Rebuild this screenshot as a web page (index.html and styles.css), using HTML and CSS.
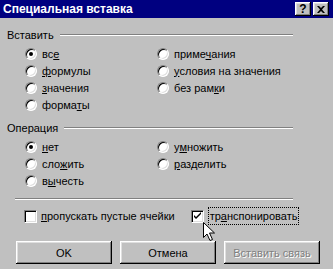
FILE: index.html
```html
<!DOCTYPE html>
<html lang="ru">
<head>
  <meta charset="UTF-8">
  <title>Специальная вставка</title>
  <link rel="stylesheet" href="styles.css">
</head>
<body>

  <!-- Title bar -->
  <header class="titlebar">
    <span class="title">Специальная вставка</span>
    <div class="title-buttons">
      <span class="tbtn help">?</span>
      <span class="tbtn close">
        <svg width="8" height="7" viewBox="0 0 8 7"><path d="M0 0h2l2 2 2-2h2L5 3.5 8 7H6L4 5 2 7H0l3-3.5z" fill="#000"/></svg>
      </span>
    </div>
  </header>

  <main class="dialog">

    <!-- Paste group -->
    <div class="group-head"><span>Вставить</span><i class="etch"></i></div>
    <div class="options paste">
      <label class="opt"><span class="radio on"></span><span>вс<u>е</u></span></label>
      <label class="opt"><span class="radio"></span><span>приме<u>ч</u>ания</span></label>
      <label class="opt"><span class="radio"></span><span><u>ф</u>ормулы</span></label>
      <label class="opt"><span class="radio"></span><span><u>у</u>словия на значения</span></label>
      <label class="opt"><span class="radio"></span><span><u>з</u>начения</span></label>
      <label class="opt"><span class="radio"></span><span>без рам<u>к</u>и</span></label>
      <label class="opt"><span class="radio"></span><span>форма<u>т</u>ы</span></label>
    </div>

    <!-- Operation group -->
    <div class="group-head"><span>Операция</span><i class="etch"></i></div>
    <div class="options">
      <label class="opt"><span class="radio on"></span><span><u>н</u>ет</span></label>
      <label class="opt"><span class="radio"></span><span>у<u>м</u>ножить</span></label>
      <label class="opt"><span class="radio"></span><span>сло<u>ж</u>ить</span></label>
      <label class="opt"><span class="radio"></span><span><u>р</u>азделить</span></label>
      <label class="opt"><span class="radio"></span><span>в<u>ы</u>честь</span></label>
    </div>

    <i class="etch full"></i>

    <div class="checks">
      <label class="chk"><span class="box"></span><span><u>п</u>ропускать пустые ячейки</span></label>
      <label class="chk"><span class="box">
        <svg width="9" height="9" viewBox="0 0 9 9"><path d="M1 3l2 2 5-5v2L3 7 1 5z" fill="#000"/></svg>
      </span><span class="focus">тр<u>а</u>нспонировать</span></label>
      <!-- mouse pointer -->
      <svg class="pointer" width="13" height="20" viewBox="0 0 13 20">
        <path d="M0.5 0.5v15l3.5-3.5 3 6.5 2.5-1-3-6.5h5z" fill="#fff" stroke="#000" stroke-width="1"/>
      </svg>
    </div>

    <div class="buttons">
      <button class="btn">OK</button>
      <button class="btn">Отмена</button>
      <button class="btn" disabled>Вставить связь</button>
    </div>

  </main>

</body>
</html>
```

FILE: styles.css
```css
* {
  margin: 0;
  padding: 0;
  box-sizing: border-box;
}

body {
  font-family: "Liberation Sans", Arial, sans-serif;
  font-size: 11px;
  color: #000;
  background: #c0c0c0;
  width: 333px;
  height: 269px;
  overflow: hidden;
}

/* title bar */
.titlebar {
  height: 18px;
  background: #000080;
  color: #fff;
  display: flex;
  align-items: center;
  justify-content: space-between;
  padding: 0 4px 0 3px;
}

.title {
  font-weight: bold;
  font-size: 12px;
}

.title-buttons {
  display: flex;
  gap: 2px;
}

.tbtn {
  width: 16px;
  height: 14px;
  background: #c0c0c0;
  color: #000;
  display: flex;
  align-items: center;
  justify-content: center;
  font-weight: bold;
  font-size: 12px;
  box-shadow: inset -1px -1px #000, inset 1px 1px #fff, inset -2px -2px #808080, inset 2px 2px #dfdfdf;
}

/* body of the dialog */
.dialog {
  padding: 10px 0 0 7px;
}

.group-head {
  display: flex;
  align-items: center;
  width: 286px;
  height: 13px;
  gap: 6px;
}

.etch {
  flex: 1;
  height: 2px;
  border-top: 1px solid #808080;
  border-bottom: 1px solid #fff;
}

.etch.full {
  display: block;
  width: 278px;
  margin: 9px 0 0 8px;
}

.options {
  display: grid;
  grid-template-columns: 132px auto;
  grid-auto-rows: 17px;
  padding: 4px 0 0 18px;
}

.options.paste {
  padding-bottom: 8px;
}

.opt {
  display: flex;
  align-items: center;
  gap: 5px;
}

.radio {
  position: relative;
  width: 12px;
  height: 12px;
  border-radius: 50%;
  background: #fff;
  border: 1px solid;
  border-color: #808080 #fff #fff #808080;
  box-shadow: inset 1px 1px #000, inset -1px -1px #dfdfdf;
}

.radio.on::after {
  content: "";
  position: absolute;
  left: 3px;
  top: 3px;
  width: 4px;
  height: 4px;
  border-radius: 50%;
  background: #000;
}

u {
  text-decoration-thickness: 1px;
  text-underline-offset: 1px;
}

/* check boxes */
.checks {
  position: relative;
  display: flex;
  align-items: center;
  height: 20px;
  margin-top: 6px;
  padding-left: 17px;
  gap: 16px;
}

.chk {
  display: flex;
  align-items: center;
  gap: 4px;
}

.box {
  width: 13px;
  height: 13px;
  background: #fff;
  border: 1px solid;
  border-color: #808080 #fff #fff #808080;
  box-shadow: inset 1px 1px #000, inset -1px -1px #dfdfdf;
  display: flex;
  align-items: center;
  justify-content: center;
}

.focus {
  border: 1px dotted #000;
  padding: 2px 1px 2px 1px;
}

.pointer {
  position: absolute;
  left: 196px;
  top: 16px;
}

/* push buttons */
.buttons {
  display: flex;
  gap: 8px;
  margin-top: 15px;
  padding-left: 9px;
}

.btn {
  width: 96px;
  height: 23px;
  font-family: "Liberation Sans", Arial, sans-serif;
  font-size: 11px;
  color: #000;
  background: #c0c0c0;
  border: none;
  box-shadow: inset -1px -1px #000, inset 1px 1px #fff, inset -2px -2px #808080, inset 2px 2px #dfdfdf;
}

.btn:disabled {
  color: #808080;
  text-shadow: 1px 1px #fff;
}
```
